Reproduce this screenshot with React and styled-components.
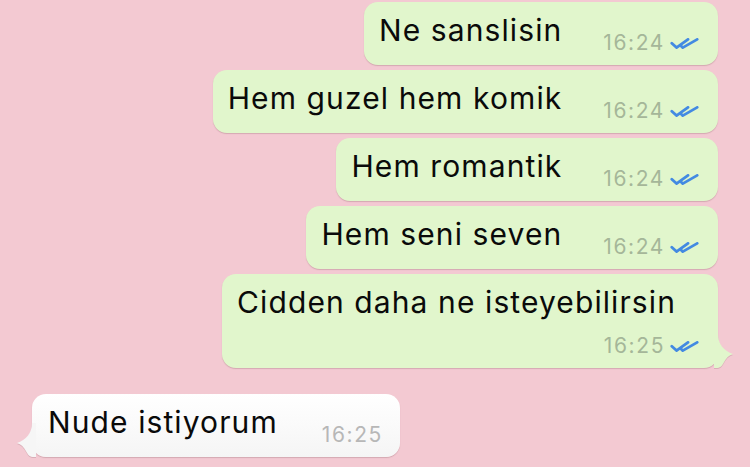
import React from "react";
import styled, { createGlobalStyle } from "styled-components";

const GlobalStyle = createGlobalStyle`
  body {
    margin: 0;
    background: #f3c9d2;
    font-family: "Inter", "Liberation Sans", sans-serif;
    -webkit-font-smoothing: antialiased;
  }
`;

const messages = [
  { text: "Ne sanslisin", time: "16:24", out: true },
  { text: "Hem guzel hem komik", time: "16:24", out: true },
  { text: "Hem romantik", time: "16:24", out: true },
  { text: "Hem seni seven", time: "16:24", out: true },
  { text: "Cidden daha ne isteyebilirsin", time: "16:25", out: true, stacked: true, tail: true },
  { text: "Nude istiyorum", time: "16:25", out: false, tail: true },
];

// iki mavi tik
const Ticks = () => (
  <svg width="29" height="11" viewBox="0 0 29 11" fill="none">
    <path d="M1.8 5.2 L6.5 9.6 L18 1.4" stroke="#438ae2" strokeWidth="2.8" strokeLinecap="round" strokeLinejoin="round" />
    <path d="M10.8 7.8 L12.8 9.6 L27.2 1.4" stroke="#438ae2" strokeWidth="2.8" strokeLinecap="round" strokeLinejoin="round" />
  </svg>
);

const Tail = ({ out }) => (
  <TailSvg $out={out} width="21" height="34" viewBox="0 0 21 34">
    <path
      d="M0 0 L4 0 C4 10 10 17 19 20 C15 21 12 24 9.5 29 C8 32 6 34 2 34 L0 34 Z"
      fill={out ? "#e1f6cc" : "#f6f6f6"}
    />
  </TailSvg>
);

const App = () => {
  return (
    <Chat>
      <GlobalStyle />
      {messages.map((m, i) => (
        <Row key={i} $out={m.out}>
          <Bubble $out={m.out} $stacked={m.stacked}>
            <Text $stacked={m.stacked}>{m.text}</Text>
            <Meta $out={m.out}>
              <Time $out={m.out}>{m.time}</Time>
              {m.out && <Ticks />}
            </Meta>
            {m.tail && <Tail out={m.out} />}
          </Bubble>
        </Row>
      ))}
    </Chat>
  );
};

const Chat = styled.div`
  display: flex;
  flex-direction: column;
  gap: 5px;
  padding-top: 2px;
  width: 750px;
  height: 467px;
  overflow: hidden;
  box-sizing: border-box;
`;

const Row = styled.div`
  display: flex;
  justify-content: ${(p) => (p.$out ? "flex-end" : "flex-start")};
  padding: 0 32px;
  margin-top: ${(p) => (p.$out ? "0" : "21px")};
`;

const Bubble = styled.div`
  position: relative;
  display: flex;
  flex-direction: ${(p) => (p.$stacked ? "column" : "row")};
  align-items: ${(p) => (p.$stacked ? "stretch" : "flex-end")};
  gap: ${(p) => (p.$stacked ? "16px" : p.$out ? "41px" : "44px")};
  padding: 10px ${(p) => (p.$out ? "19px" : "17px")} 17px ${(p) => (p.$out ? "15px" : "16px")};
  border-radius: 14px;
  background: ${(p) => (p.$out ? "#e1f6cc" : "linear-gradient(#ffffff, #f5f5f5)")};
  box-shadow: 0 1px 1px rgba(120, 70, 80, 0.25);
`;

const Text = styled.div`
  font-size: 30px;
  line-height: 36px;
  color: #0a0a0a;
  letter-spacing: 1.1px;
  margin-right: ${(p) => (p.$stacked ? "23px" : "0")};
  white-space: nowrap;
`;

const Meta = styled.div`
  display: flex;
  align-items: center;
  justify-content: flex-end;
  gap: 5px;
  margin-bottom: -5px;
  height: 20px;
`;

const Time = styled.span`
  font-size: 21px;
  line-height: 20px;
  color: ${(p) => (p.$out ? "#a5b699" : "#b7b7b7")};
  letter-spacing: 1.6px;
`;

const TailSvg = styled.svg`
  position: absolute;
  bottom: 0;
  ${(p) => (p.$out ? "right: -17px;" : "left: -17px; transform: scaleX(-1);")}
  filter: drop-shadow(0 1px 0.5px rgba(120, 70, 80, 0.2));
`;

export default App;
